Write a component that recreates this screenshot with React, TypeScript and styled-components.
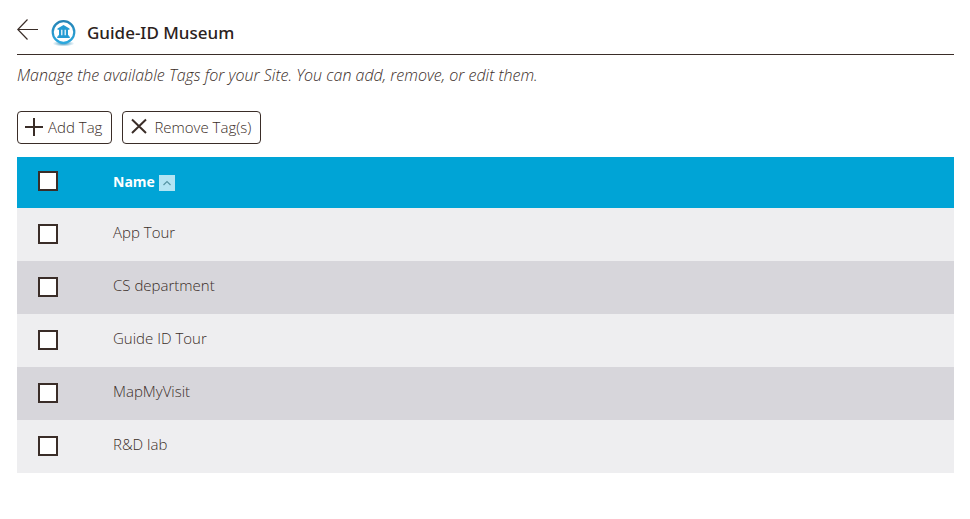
import React, { useEffect, useRef, useState } from 'react';
import styled, { createGlobalStyle } from 'styled-components';

const ink = '#3a2d28';

const GlobalStyle = createGlobalStyle`
  * { box-sizing: border-box; }
  body {
    margin: 0;
    background: #fff;
    color: ${ink};
    font-family: 'Open Sans', 'Noto Sans', sans-serif;
    font-size: 15px;
    font-weight: 300;
    line-height: 20px;
  }
`;

const Page = styled.main`
  padding: 16px 16px 40px 17px;
`;

const Header = styled.header`
  display: flex;
  align-items: flex-start;
  height: 39px;
  border-bottom: 1px solid ${ink};
`;

const BackLink = styled.a`
  display: flex;
  margin: 3px 12px 0 0;
  color: ${ink};
`;

const Logo = styled.svg`
  margin-top: 3px;
`;

const Title = styled.h1`
  margin: 4px 0 0 11px;
  font-family: 'Noto Sans', sans-serif;
  font-size: 17px;
  font-weight: 500;
  line-height: 26px;
  color: #2b2220;
`;

const Intro = styled.p`
  margin: 10px 0 26px;
  font-size: 16px;
  font-style: italic;
`;

const Toolbar = styled.div`
  display: flex;
  gap: 10px;
  margin-bottom: 13px;
`;

const ToolButton = styled.button<{ $gap: number }>`
  display: flex;
  align-items: center;
  gap: ${({ $gap }) => $gap}px;
  height: 33px;
  padding: 0 9px 1px 7px;
  border: 1px solid ${ink};
  border-radius: 4px;
  background: #fff;
  color: inherit;
  font: inherit;
  cursor: pointer;
`;

const Table = styled.table`
  width: 100%;
  border-collapse: collapse;
  text-align: left;
`;

const HeadRow = styled.tr`
  height: 51px;
  background: #00a4d6;
  color: #fff;
`;

const Row = styled.tr`
  height: 53px;
  background: #eeeef0;
  &:nth-child(even) { background: #d7d6db; }
`;

const CheckCell = styled.td`
  width: 96px;
  padding: 0 0 2px 21px;
`;

const CheckHead = styled(CheckCell)`
  padding-bottom: 4px;
`;

const NameHead = styled.th`
  padding: 0 0 2px;
  font-weight: 700;
`;

const NameCell = styled.td`
  padding: 0 0 6px;
`;

const SortButton = styled.button`
  display: flex;
  align-items: center;
  gap: 4px;
  padding: 0;
  border: 0;
  background: none;
  color: inherit;
  font: inherit;
  font-size: 14px;
  cursor: pointer;
`;

const SortMark = styled.span`
  display: flex;
  width: 16px;
  height: 16px;
  margin-top: 3px;
  background: #b3e4f3;
`;

const Checkbox = styled.input`
  appearance: none;
  display: block;
  width: 20px;
  height: 20px;
  margin: 0;
  border: 2px solid ${ink};
  background: #fff;
  &:checked { background: ${ink}; box-shadow: inset 0 0 0 3px #fff; }
`;

const tags = ['App Tour', 'CS department', 'Guide ID Tour', 'MapMyVisit', 'R&D lab'];

export default function App() {
  const [selected, setSelected] = useState<string[]>([]);
  const [descending, setDescending] = useState(false);
  const allBox = useRef<HTMLInputElement>(null);
  const all = selected.length === tags.length;

  useEffect(() => {
    if (allBox.current) allBox.current.indeterminate = selected.length > 0 && !all;
  }, [selected, all]);

  const toggle = (tag: string) =>
    setSelected(now => (now.includes(tag) ? now.filter(t => t !== tag) : [...now, tag]));
  const rows = descending ? [...tags].reverse() : tags;

  return (
    <>
      <GlobalStyle />
      <Page>
        <Header>
          <BackLink href="#" aria-label="Back">
            <svg width="22" height="22" viewBox="0 0 22 22" fill="none" stroke="currentColor" strokeWidth="1.2" aria-hidden="true">
              <path d="M10.5 .5.8 10.5l9.7 10M1 10.5h20" />
            </svg>
          </BackLink>
          <Logo width="25" height="28" viewBox="0 0 25 28" aria-hidden="true">
            <defs>
              <linearGradient id="ring" x1="0" y1="0" x2="0" y2="1">
                <stop offset="0" stopColor="#2583b5" />
                <stop offset="1" stopColor="#2ba9df" />
              </linearGradient>
              <radialGradient id="shade">
                <stop offset="0" stopColor="#2f86b0" />
                <stop offset="1" stopColor="#4b9fc6" stopOpacity="0" />
              </radialGradient>
            </defs>
            <ellipse cx="12.5" cy="24.5" rx="11" ry="3" fill="url(#shade)" />
            <circle cx="12.5" cy="13" r="10.8" fill="#fff" stroke="url(#ring)" strokeWidth="2.2" />
            <path fill="#239bd3" d="m12.5 6 6 3.4v1.3H6.5V9.4zM8 10.7h2.2v5.8H8zm3.4 0h2.2v5.8h-2.2zm3.4 0H17v5.8h-2.2zM7.2 16.3h10.6v1.3H7.2zm-1 1.3h12.6V19H6.2z" />
          </Logo>
          <Title>Guide-ID Museum</Title>
        </Header>
        <Intro>Manage the available Tags for your Site. You can add, remove, or edit them.</Intro>
        <Toolbar>
          <ToolButton type="button" $gap={5}>
            <svg width="18" height="18" viewBox="0 0 18 18" stroke="currentColor" strokeWidth="2" aria-hidden="true">
              <path d="M9 0v18M0 9h18" />
            </svg>
            Add Tag
          </ToolButton>
          <ToolButton type="button" $gap={7}>
            <svg width="17" height="18" viewBox="0 0 17 18" stroke="currentColor" strokeWidth="2" aria-hidden="true">
              <path d="m2 1.5 14 13.5M16 1.5 2 15" />
            </svg>
            Remove Tag(s)
          </ToolButton>
        </Toolbar>
        <Table>
          <thead>
            <HeadRow>
              <CheckHead>
                <Checkbox
                  ref={allBox}
                  type="checkbox"
                  aria-label="Select all tags"
                  checked={all}
                  onChange={() => setSelected(all ? [] : tags)}
                />
              </CheckHead>
              <NameHead scope="col" aria-sort={descending ? 'descending' : 'ascending'}>
                <SortButton type="button" onClick={() => setDescending(!descending)}>
                  Name
                  <SortMark>
                    <svg width="16" height="16" viewBox="0 0 16 16" fill="none" stroke="#5795a5" strokeWidth="1.2" aria-hidden="true">
                      <path d={descending ? 'm4.5 6.5 3.5 3.5 3.5-3.5' : 'M4.5 10 8 6.5l3.5 3.5'} />
                    </svg>
                  </SortMark>
                </SortButton>
              </NameHead>
            </HeadRow>
          </thead>
          <tbody>
            {rows.map((tag, i) => (
              <Row key={tag}>
                <CheckCell>
                  <Checkbox
                    id={`tag-${i}`}
                    type="checkbox"
                    checked={selected.includes(tag)}
                    onChange={() => toggle(tag)}
                  />
                </CheckCell>
                <NameCell>
                  <label htmlFor={`tag-${i}`}>{tag}</label>
                </NameCell>
              </Row>
            ))}
          </tbody>
        </Table>
      </Page>
    </>
  );
}
